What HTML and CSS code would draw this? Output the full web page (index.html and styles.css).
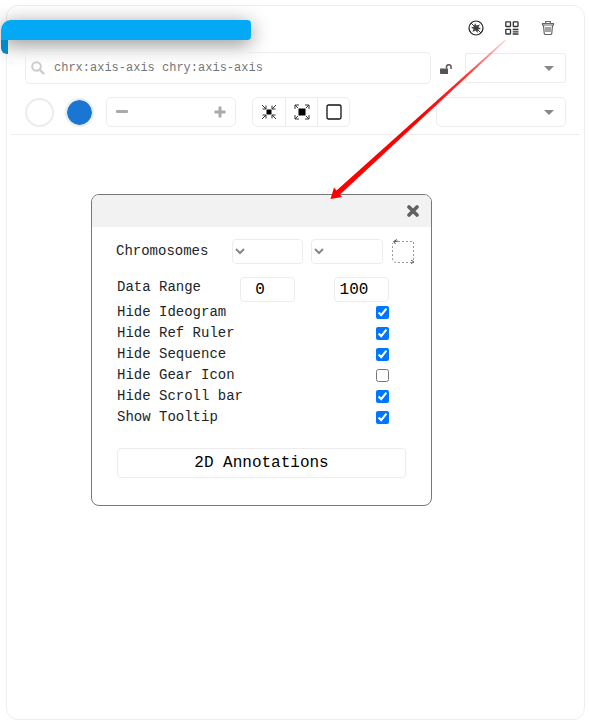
FILE: index.html
```html
<!DOCTYPE html>
<html lang="en">
<head>
<meta charset="utf-8">
<title>Browser panel</title>
<link rel="stylesheet" href="styles.css">
</head>
<body>
<main class="panel">
  <div class="ribbon"></div>
  <header class="actions">
    <button class="icon-button" type="button" aria-label="Navigation">
      <svg width="16" height="16" viewBox="0 0 16 16"><circle cx="8" cy="8" r="7" fill="none" stroke="#222" stroke-width="1.2"/><path d="M7 3 8.500 5.500 12 4.500 10.500 7 13 9 10 9.500 9.500 13 7.500 10.500 4.500 12 5.500 9 3 7.500 6 6.500Z" fill="#444"/><path d="M3 3 13 13" stroke="#333"/></svg>
    </button>
    <button class="icon-button" type="button" aria-label="Settings">
      <svg width="14" height="14" viewBox="0 0 14 14" fill="none" stroke="#333" stroke-width="1.300"><rect x=".8" y=".8" width="4.700" height="4.700" rx=".5"/><rect x="8.300" y=".8" width="4.700" height="4.700" rx=".5"/><rect x=".8" y="8.300" width="4.700" height="4.700" rx=".5"/><path d="M7.700 8.500H13.500M7.700 10.800H13.500M7.700 13H13.500"/></svg>
    </button>
    <button class="icon-button" type="button" aria-label="Delete">
      <svg width="14" height="16" viewBox="0 0 14 16" fill="none" stroke="#666" stroke-width="1.200"><path d="M1.500 3.500H12.500V5H1.500ZM4.700 3V1.500H9.300V3M2.500 5.500 3.200 13.200Q3.300 14.500 4.500 14.500H9.500Q10.700 14.500 10.800 13.200L11.500 5.500M5 7V12M7 7V12M9 7V12"/></svg>
    </button>
  </header>

  <div class="toolbar">
    <div class="search">
      <svg width="14" height="14" viewBox="0 0 14 14" fill="none" stroke="#ccc" stroke-width="2"><circle cx="5.500" cy="5.500" r="4.300"/><path d="M8.800 8.800 12.500 12.500" stroke-width="2.400" stroke-linecap="round"/></svg>
      <input type="text" aria-label="Region" placeholder="chrx:axis-axis chry:axis-axis">
    </div>
    <button class="icon-button lock" type="button" aria-label="Unlock axes">
      <svg width="12" height="10" viewBox="0 0 12 10"><path d="M0 4.500H8V10H1Q0 10 0 9Z" fill="#555"/><path d="M6.500 4.500V3Q6.500 .8 8.800 .8T11.100 3V5" fill="none" stroke="#555" stroke-width="1.500"/></svg>
    </button>
    <div class="drop drop-small"><select aria-label="Resolution"></select></div>
  </div>

  <div class="toolbar toolbar-second">
    <button class="swatch" type="button" aria-label="White"></button>
    <button class="swatch swatch-blue" type="button" aria-label="Blue"></button>
    <div class="zoom">
      <button class="icon-button" type="button" aria-label="Zoom out"><svg width="12" height="12" viewBox="0 0 12 12"><rect y="4" width="12" height="3" rx="1" fill="#aaa"/></svg></button>
      <button class="icon-button" type="button" aria-label="Zoom in"><svg width="12" height="12" viewBox="0 0 12 12"><path d="M4.500 .5H7.500V4.500H11.500V7.500H7.500V11.500H4.500V7.500H.5V4.500H4.500Z" fill="#aaa"/></svg></button>
    </div>
    <div class="group">
      <button type="button" aria-label="Shrink"><svg width="16" height="16" viewBox="0 0 16 16" fill="none" stroke="#333"><rect x="5.500" y="5.500" width="5" height="5" fill="#000" stroke="none"/><path d="M1 1 5 5M1.500 5H5V1.500M15 1 11 5M14.500 5H11V1.500M1 15 5 11M1.500 11H5V14.500M15 15 11 11M14.500 11H11V14.500"/></svg></button>
      <button type="button" aria-label="Expand"><svg width="16" height="16" viewBox="0 0 16 16" fill="none" stroke="#333"><rect x="4.500" y="4.500" width="7" height="7" fill="#000" stroke="none"/><path d="M1 1 4 4M1 5V1H5M15 1 12 4M15 5V1H11M1 15 4 12M1 11V15H5M15 15 12 12M15 11V15H11"/></svg></button>
      <button type="button" aria-label="Select area"><svg width="16" height="16" viewBox="0 0 16 16"><rect x="1" y="1" width="14" height="14" rx="1.500" fill="none" stroke="#111" stroke-width="1.300"/></svg></button>
    </div>
    <div class="drop drop-wide"><select aria-label="Normalization"></select></div>
  </div>

  <section class="dialog" role="dialog" aria-label="Settings">
    <div class="dialog-head">
      <button class="icon-button" type="button" aria-label="Close"><svg width="12" height="12" viewBox="0 0 12 12"><path d="M2 2 10 10M10 2 2 10" stroke="#616161" stroke-width="3.600" stroke-linecap="round"/></svg></button>
    </div>
    <form class="dialog-body">
      <div class="chromosomes">
        <label for="chr-x">Chromosomes</label>
        <div class="pick"><select id="chr-x"></select><svg width="10" height="7" viewBox="0 0 10 7"><path d="M1 1 5 5 9 1" fill="none" stroke="#888" stroke-width="2"/></svg></div>
        <div class="pick"><select aria-label="Second chromosome"></select><svg width="10" height="7" viewBox="0 0 10 7"><path d="M1 1 5 5 9 1" fill="none" stroke="#888" stroke-width="2"/></svg></div>
        <button class="icon-button" type="button" aria-label="Swap"><svg width="24" height="25" viewBox="0 0 24 25" fill="none" stroke="#999"><path d="M3 2.500H22.500V22M21 23.500H6Q1.500 23.500 1.500 19V4" stroke-dasharray="2 2"/><path d="M6 .5 2.500 2.500 4.500 5M3 3 7 2M20 21 23 23 20 24.500" stroke="#555"/></svg></button>
      </div>
      <div class="range">
        <label for="range-min">Data Range</label>
        <input id="range-min" type="text" value="0">
        <input type="text" aria-label="Maximum" value="100">
      </div>
      <div class="option"><label for="ideogram">Hide Ideogram</label><input id="ideogram" type="checkbox" checked></div>
      <div class="option"><label for="ruler">Hide Ref Ruler</label><input id="ruler" type="checkbox" checked></div>
      <div class="option"><label for="sequence">Hide Sequence</label><input id="sequence" type="checkbox" checked></div>
      <div class="option"><label for="gear">Hide Gear Icon</label><input id="gear" type="checkbox"></div>
      <div class="option"><label for="scroll">Hide Scroll bar</label><input id="scroll" type="checkbox" checked></div>
      <div class="option"><label for="tooltip">Show Tooltip</label><input id="tooltip" type="checkbox" checked></div>
      <button class="annotations" type="button">2D Annotations</button>
    </form>
  </section>

  <svg class="pointer" width="180" height="164" viewBox="0 0 180 164" aria-hidden="true">
    <defs><linearGradient id="fade" gradientUnits="userSpaceOnUse" x1="176" y1="2" x2="90" y2="80"><stop offset="0" stop-color="red" stop-opacity=".15"/><stop offset=".45" stop-color="red" stop-opacity=".8"/><stop offset="1" stop-color="red"/></linearGradient></defs>
    <path d="M1.500 161 5 149.500 7.500 152.500 176 1.500 177 2.500 11 156.500 13 159Z" fill="url(#fade)"/>
  </svg>
</main>
</body>
</html>
```

FILE: styles.css
```css
* { box-sizing: border-box; }

body {
  margin: 0;
  padding: 5px 4px 6px 6px;
  background: #fff;
  color: #212529;
  font: 14px/21px "Liberation Mono", monospace;
}

button, input, select { font: inherit; margin: 0; }

.panel {
  position: relative;
  min-height: calc(100vh - 11px);
  padding: 0 4px;
  border: 1px solid #eee;
  border-radius: 12px;
}

.ribbon {
  position: absolute;
  top: 14px;
  left: -6px;
  width: 250px;
  height: 20px;
  background: #03a9f4;
  border-radius: 10px 4px 4px 0;
  box-shadow: 0 4px 20px rgba(0, 0, 0, 0.45);
}

.ribbon::before {
  content: "";
  position: absolute;
  top: 10px;
  left: 0;
  width: 7px;
  height: 24px;
  background: #0288c4;
  border-radius: 0 0 0 6px;
}

.ribbon::after {
  content: "";
  position: absolute;
  top: 10px;
  left: 0;
  width: 7px;
  height: 10px;
  background: #03a9f4;
}

.icon-button {
  display: flex;
  align-items: center;
  justify-content: center;
  padding: 0;
  border: 0;
  background: none;
}

.actions {
  display: flex;
  justify-content: flex-end;
  gap: 12px;
  padding: 10px 20px 0 0;
}

.actions .icon-button { width: 24px; height: 24px; }

.toolbar {
  display: flex;
  align-items: center;
  padding: 12px 14px 0;
}

.toolbar-second {
  padding: 13px 14px 7px;
  border-bottom: 1px solid #eee;
}

.search {
  position: relative;
  display: flex;
  flex: 1;
  align-items: center;
  height: 32px;
  padding-left: 5px;
  border: 1px solid #ececec;
  border-radius: 5px;
}

.search input {
  flex: 1;
  min-width: 0;
  height: 28px;
  padding: 0 9px;
  border: 0;
  outline: 0;
  background: none;
  font-size: 12px;
}

.search input::placeholder { color: #757575; }

.lock {
  width: 34px;
  padding: 2px 4px 0 0;
}

.drop {
  position: relative;
  height: 30px;
}

.drop-small { width: 101px; }
.drop-wide { width: 130px; margin-left: auto; }

.drop select {
  width: 100%;
  height: 100%;
  border: 1px solid #ececec;
  border-radius: 5px;
  background: #fff;
  appearance: none;
}

.drop-small select { border-radius: 2px; }

.drop::after {
  content: "";
  position: absolute;
  top: 13px;
  right: 12px;
  border: 5px solid transparent;
  border-top-color: #888;
  border-bottom: 0;
}

.swatch {
  width: 29px;
  height: 29px;
  margin-right: 11px;
  padding: 0;
  border: 2px solid #ececec;
  border-radius: 50%;
  background: #fff;
}

.swatch-blue {
  margin-right: 12px;
  background: #1976d2;
  background-clip: padding-box;
}

.zoom {
  display: flex;
  align-items: center;
  justify-content: space-between;
  width: 130px;
  height: 30px;
  margin-right: 16px;
  padding: 0 9px;
  border: 1px solid #ececec;
  border-radius: 5px;
}

.group {
  display: flex;
  height: 30px;
  border: 1px solid #ececec;
  border-radius: 5px;
}

.group button {
  display: flex;
  align-items: center;
  justify-content: center;
  width: 32px;
  padding: 0;
  border: 0;
  background: none;
}

.group button + button { border-left: 1px solid #ececec; }

.dialog {
  width: 341px;
  margin: 59px 0 0 80px;
  border: 1px solid #777;
  border-radius: 8px;
  background: #fff;
  overflow: hidden;
}

.dialog-head {
  display: flex;
  align-items: center;
  justify-content: flex-end;
  height: 32px;
  padding-right: 12px;
  background: #f2f2f2;
}

.dialog-body { padding: 12px 25px 27px; }

.chromosomes {
  display: grid;
  grid-template-columns: 108px 71px 72px 24px;
  column-gap: 8px;
  align-items: center;
  margin: 0 -8px 0 -1px;
}

.pick {
  position: relative;
  height: 25px;
}

.pick select, .range input {
  width: 100%;
  height: 25px;
  border: 1px solid #ececec;
  border-radius: 4px;
  background: #fff;
  appearance: none;
}

.pick svg { position: absolute; top: 9px; left: 3px; }

.range {
  display: grid;
  grid-template-columns: 84px 55px 55px;
  column-gap: 39px;
  align-items: start;
  margin-top: 13px;
}

.range input {
  padding: 0 15px 0 0;
  color: #000;
  font-size: 16px;
  text-align: center;
}

.option {
  display: flex;
  align-items: center;
  justify-content: space-between;
  height: 21px;
  padding-right: 17px;
}

.option input { width: 13px; height: 13px; }

.annotations {
  display: block;
  width: 100%;
  height: 30px;
  margin-top: 20px;
  padding: 0;
  border: 1px solid #ececec;
  border-radius: 4px;
  background: #fff;
  color: #000;
  font-size: 16px;
}

.pointer {
  position: absolute;
  top: 32px;
  left: 322px;
  pointer-events: none;
}
```
